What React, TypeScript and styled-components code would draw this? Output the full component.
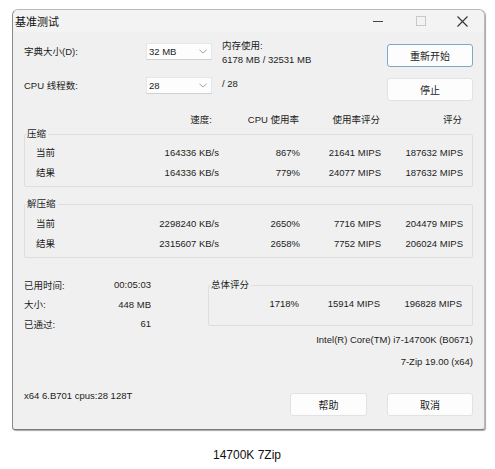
import React from "react";
import styled, { createGlobalStyle } from "styled-components";

const Global = createGlobalStyle`
  html, body { margin: 0; padding: 0; background: #ffffff; }
  body { font-family: "Liberation Sans", "Noto Sans CJK SC", sans-serif; color: #1c1c1c; }
  * { box-sizing: border-box; }
`;

const Page = styled.div`
  width: 495px;
  height: 469px;
  overflow: hidden;
  background: #fff;
  padding: 9px 11px 0 12px;
`;

const Window = styled.div`
  width: 473px;
  height: 421px;
  background: #f0f0f0;
  border: 1px solid #b9b9b9;
  border-left-color: #8a8a8a;
  border-bottom-color: #7a7a7a;
  border-radius: 6px 6px 3px 3px;
  box-shadow: 1px 1px 1px rgba(0,0,0,0.35);
  display: flex;
  flex-direction: column;
  font-size: 9.5px;
`;

const TitleBar = styled.div`
  height: 22px;
  display: flex;
  align-items: center;
  padding-left: 2px;
  background: #f3f3f3;
  border-radius: 6px 6px 0 0;
`;

const Title = styled.div`
  flex: 1;
  font-size: 11px;
  font-family: "Noto Sans CJK SC", sans-serif;
  color: #111;
`;

const Ctrl = styled.div<{ $w: number }>`
  width: ${p => p.$w}px;
  height: 22px;
  display: flex;
  align-items: center;
  justify-content: center;
`;

const Body = styled.div`
  flex: 1;
  display: flex;
  flex-direction: column;
  padding: 8px 11px 0 11px;
`;

const TopRow = styled.div<{ $h: number; $mb?: number }>`
  display: grid;
  grid-template-columns: 122px 66px 10px 1fr 86px;
  align-items: start;
  height: ${p => p.$h}px;
  margin-bottom: ${p => p.$mb ?? 0}px;
`;

const RowLabel = styled.div`
  white-space: nowrap;
  line-height: 17px;
  margin-top: 3px;
`;

const Label = styled.div`
  white-space: nowrap;
`;

const Combo = styled.div`
  margin-top: 3px;
  height: 17px;
  background: #fdfdfd;
  border: 1px solid #e6e6e6;
  border-bottom-color: #d0d0d0;
  display: flex;
  align-items: center;
  padding: 0 4px 0 2px;
  justify-content: space-between;
`;

const MemInfo = styled.div<{ $mt: number }>`
  grid-column: 4;
  line-height: 14px;
  margin-top: ${p => p.$mt}px;
`;

const Button = styled.button<{ $primary?: boolean; $w?: number; $mt?: number }>`
  width: ${p => p.$w ?? 86}px;
  height: 23px;
  margin-top: ${p => p.$mt ?? 0}px;
  background: #fdfdfd;
  border: 1px solid ${p => (p.$primary ? "#7fa8c8" : "#e2e2e2")};
  border-radius: 3px;
  font-family: "Noto Sans CJK SC", sans-serif;
  font-size: 10px;
  color: #1c1c1c;
  padding: 0;
`;

const Grid = styled.div<{ $h?: number; $mt?: number }>`
  display: grid;
  grid-template-columns: 73px 110px 81px 81px 82px;
  align-items: center;
  height: ${p => p.$h ?? 20}px;
  margin-top: ${p => p.$mt ?? 0}px;
  padding-left: 11px;
`;

const Cell = styled.div<{ $pr?: number }>`
  text-align: right;
  white-space: nowrap;
  padding-right: ${p => p.$pr ?? 0}px;
`;

const GroupBox = styled.div<{ $mt: number; $pt: number; $pb: number }>`
  position: relative;
  margin-top: ${p => p.$mt}px;
  border: 1px solid #dedede;
  border-radius: 2px;
  padding: ${p => p.$pt}px 0 ${p => p.$pb}px 0;
`;

const Legend = styled.div`
  position: absolute;
  top: -8px;
  left: 2px;
  background: #f0f0f0;
  padding-right: 2px;
  line-height: 14px;
`;

const Bottom = styled.div`
  display: grid;
  grid-template-columns: 127px 57px 1fr;
  align-items: start;
  margin-top: 19px;
`;

const Stats = styled.div`
  display: grid;
  grid-template-columns: 1fr auto;
  grid-auto-rows: 19.5px;
  align-items: center;
  margin-top: -2px;
`;

const OverallGrid = styled.div`
  display: grid;
  grid-template-columns: 1fr 81px 81px 82px;
  align-items: center;
  height: 20px;
  padding-right: 10px;
`;

const Info = styled.div`
  text-align: right;
  line-height: 22px;
  margin-top: -5px;
`;

const Footer = styled.div`
  display: flex;
  align-items: flex-start;
  margin-top: 20px;
`;

const FooterText = styled.div`
  flex: 1;
  line-height: 12px;
  margin-top: -3px;
`;

const FooterButtons = styled.div`
  display: flex;
  gap: 20px;
`;

const Caption = styled.div`
  text-align: center;
  font-family: "Liberation Sans", sans-serif;
  font-size: 12px;
  color: #111;
  margin-top: 18px;
  padding-right: 2px;
`;

const Chevron = () => (
  <svg width="8" height="5" viewBox="0 0 8 5">
    <path d="M0.5 0.8 L4 4 L7.5 0.8" fill="none" stroke="#9a9a9a" strokeWidth="0.9" />
  </svg>
);

const rowsC = [
  ["当前", "164336 KB/s", "867%", "21641 MIPS", "187632 MIPS"],
  ["结果", "164336 KB/s", "779%", "24077 MIPS", "187632 MIPS"],
];
const rowsD = [
  ["当前", "2298240 KB/s", "2650%", "7716 MIPS", "204479 MIPS"],
  ["结果", "2315607 KB/s", "2658%", "7752 MIPS", "206024 MIPS"],
];

const DataRow = ({ r }: { r: string[] }) => (
  <Grid>
    <Label>{r[0]}</Label>
    <Cell>{r[1]}</Cell>
    <Cell>{r[2]}</Cell>
    <Cell>{r[3]}</Cell>
    <Cell>{r[4]}</Cell>
  </Grid>
);

export default function App() {
  return (
    <Page>
      <Global />
      <Window>
        <TitleBar>
          <Title>基准测试</Title>
          <Ctrl $w={48}>
            <svg width="10" height="10" viewBox="0 0 10 10"><path d="M0 5.5 H10" stroke="#444" strokeWidth="1" /></svg>
          </Ctrl>
          <Ctrl $w={38}>
            <svg width="10" height="10" viewBox="0 0 10 10"><rect x="0.5" y="0.5" width="9" height="9" fill="none" stroke="#c8c8c8" strokeWidth="1" /></svg>
          </Ctrl>
          <Ctrl $w={44}>
            <svg width="11" height="11" viewBox="0 0 11 11"><path d="M0.5 0.5 L10.5 10.5 M10.5 0.5 L0.5 10.5" stroke="#333" strokeWidth="1.1" /></svg>
          </Ctrl>
        </TitleBar>
        <Body>
          <TopRow $h={30} $mb={4}>
            <RowLabel>字典大小(D):</RowLabel>
            <Combo>32 MB <Chevron /></Combo>
            <div />
            <MemInfo $mt={-1}>内存使用:<br />6178 MB / 32531 MB</MemInfo>
            <Button $primary $mt={4}>重新开始</Button>
          </TopRow>
          <TopRow $h={27}>
            <RowLabel>CPU 线程数:</RowLabel>
            <Combo>28 <Chevron /></Combo>
            <div />
            <MemInfo $mt={3}>/ 28</MemInfo>
            <Button $mt={4}>停止</Button>
          </TopRow>
          <Grid $h={14} $mt={11}>
            <div />
            <Cell $pr={6}>速度:</Cell>
            <Cell>CPU 使用率</Cell>
            <Cell>使用率评分</Cell>
            <Cell>评分</Cell>
          </Grid>
          <GroupBox $mt={8} $pt={7} $pb={4}>
            <Legend>压缩</Legend>
            {rowsC.map((r, i) => <DataRow key={i} r={r} />)}
          </GroupBox>
          <GroupBox $mt={17} $pt={8} $pb={4}>
            <Legend>解压缩</Legend>
            {rowsD.map((r, i) => <DataRow key={i} r={r} />)}
          </GroupBox>
          <Bottom>
            <Stats>
              <Label>已用时间:</Label><Cell>00:05:03</Cell>
              <Label>大小:</Label><Cell>448 MB</Cell>
              <Label>已通过:</Label><Cell>61</Cell>
            </Stats>
            <div />
            <GroupBox $mt={8} $pt={7} $pb={12}>
              <Legend>总体评分</Legend>
              <OverallGrid>
                <div />
                <Cell>1718%</Cell>
                <Cell>15914 MIPS</Cell>
                <Cell>196828 MIPS</Cell>
              </OverallGrid>
            </GroupBox>
          </Bottom>
          <Info>
            Intel(R) Core(TM) i7-14700K (B0671)<br />7-Zip 19.00 (x64)
          </Info>
          <Footer>
            <FooterText>x64 6.B701 cpus:28 128T</FooterText>
            <FooterButtons>
              <Button $w={77}>帮助</Button>
              <Button>取消</Button>
            </FooterButtons>
          </Footer>
        </Body>
      </Window>
      <Caption>14700K 7Zip</Caption>
    </Page>
  );
}
